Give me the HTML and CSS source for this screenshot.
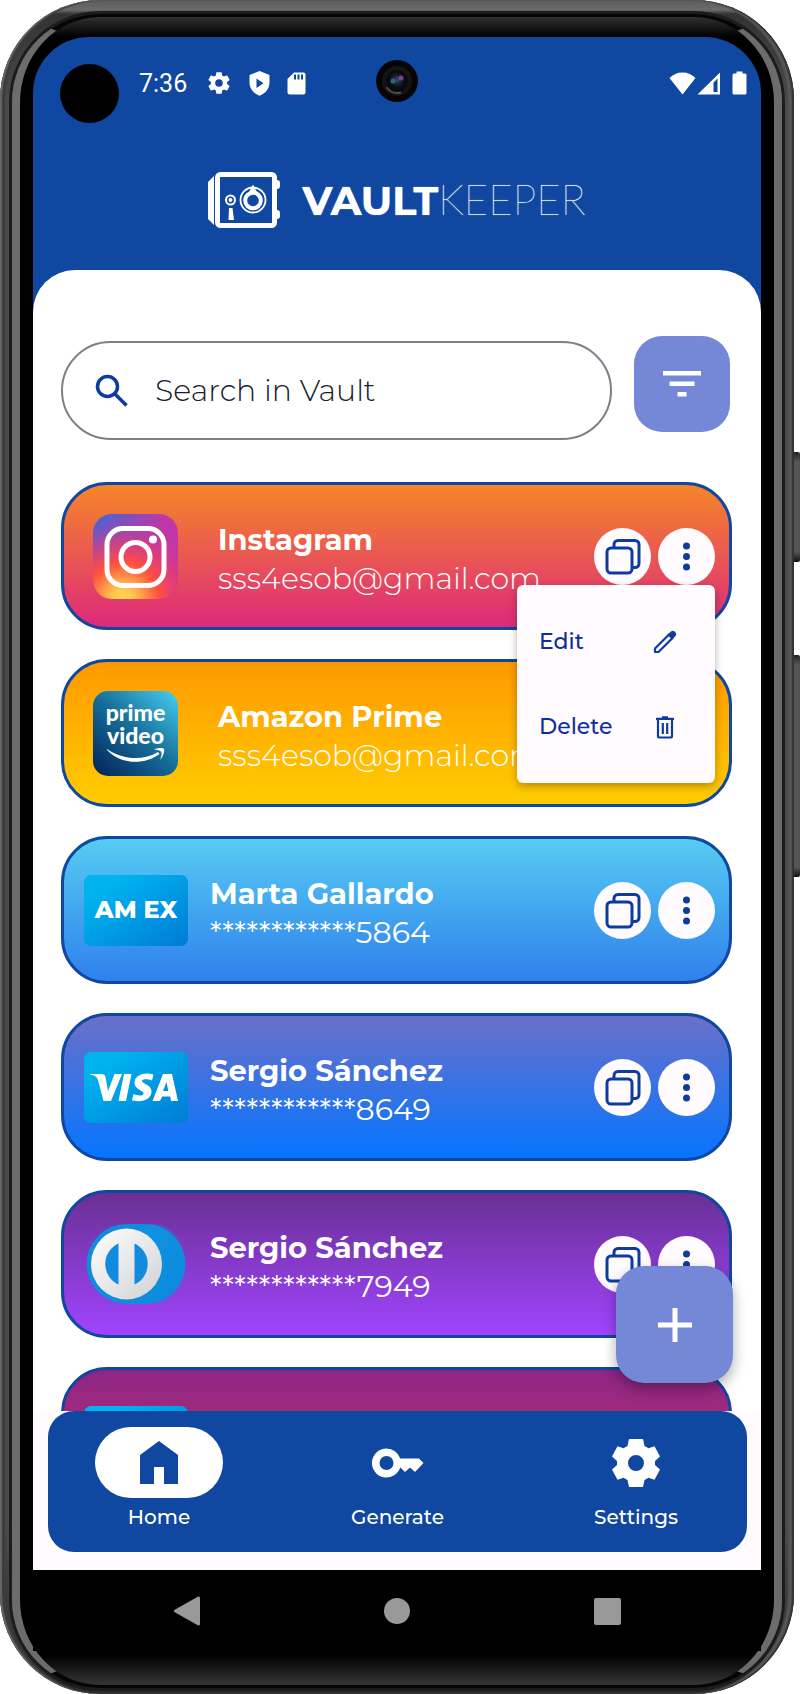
FILE: index.html
```html
<!DOCTYPE html>
<html lang="en">
<head>
<meta charset="utf-8">
<meta name="viewport" content="width=device-width, initial-scale=1">
<title>VaultKeeper</title>
<link rel="stylesheet" href="styles.css">
</head>
<body>
<svg class="defs" aria-hidden="true">
  <defs>
    <linearGradient id="sky" x1="0" y1="0" x2="1" y2="1"><stop offset="0.2" stop-color="#00b2ee"/><stop offset="1" stop-color="#007bd5"/></linearGradient>
    <linearGradient id="silver" x1="0" y1="0" x2="1" y2="1"><stop offset="0.1" stop-color="#fafafa"/><stop offset="0.9" stop-color="#d5d6d8"/></linearGradient>
    <linearGradient id="prime" x1="0.1" y1="1" x2="1" y2="0"><stop offset="0" stop-color="#042860"/><stop offset="0.5" stop-color="#176f9a"/><stop offset="1" stop-color="#46d0f4"/></linearGradient>
    <linearGradient id="insta-base" x1="0" y1="0" x2="1" y2="0.3"><stop offset="0" stop-color="#4168d4"/><stop offset="0.8" stop-color="#c136a6"/></linearGradient>
    <radialGradient id="insta-glow" cx="0.35" cy="1" r="0.95"><stop offset="0" stop-color="#ffdc50"/><stop offset="0.15" stop-color="#ffc24c"/><stop offset="0.45" stop-color="#ff5040"/><stop offset="0.7" stop-color="#e83c70" stop-opacity="0.7"/><stop offset="1" stop-color="#c136a6" stop-opacity="0"/></radialGradient>
    <radialGradient id="lens"><stop offset="0" stop-color="#3a4a70"/><stop offset="0.5" stop-color="#1d2436"/><stop offset="1" stop-color="#0a0a0c"/></radialGradient>
    <symbol id="copy" viewBox="0 0 57 57">
      <g fill="none" stroke="#0d3ba0" stroke-width="3" stroke-linejoin="round">
        <rect x="13" y="20" width="25" height="25" rx="4"/>
        <path d="M20 20v-3.500a4 4 0 0 1 4-4h17a4 4 0 0 1 4 4v19a4 4 0 0 1-4 4h-3"/>
      </g>
    </symbol>
    <symbol id="more" viewBox="0 0 57 57"><g fill="#0d3ba0"><circle cx="28.500" cy="18" r="3.500"/><circle cx="28.500" cy="28.500" r="3.500"/><circle cx="28.500" cy="39" r="3.500"/></g></symbol>
    <symbol id="gear" viewBox="0 0 24 24"><path d="M19.430 12.980c.04-.32.07-.64.07-.98s-.03-.66-.07-.98l2.110-1.650c.19-.15.24-.42.12-.64l-2-3.460c-.12-.22-.39-.3-.61-.22l-2.490 1c-.52-.4-1.080-.73-1.690-.98l-.38-2.650C14.460 2.180 14.250 2 14 2h-4c-.25 0-.46.18-.49.42l-.38 2.650c-.61.25-1.170.59-1.690.98l-2.490-1c-.23-.09-.49 0-.61.22l-2 3.460c-.13.22-.07.49.12.64l2.110 1.650c-.04.32-.07.65-.07.98s.03.66.07.98l-2.110 1.650c-.19.15-.24.42-.12.64l2 3.460c.12.22.39.3.61.22l2.490-1c.52.4 1.080.73 1.690.98l.38 2.650c.03.24.24.42.49.42h4c.25 0 .46-.18.49-.42l.38-2.650c.61-.25 1.170-.59 1.690-.98l2.490 1c.23.09.49 0 .61-.22l2-3.460c.12-.22.07-.49-.12-.64zM12 15.500a3.500 3.500 0 1 1 0-7 3.500 3.500 0 0 1 0 7z"/></symbol>
  </defs>
</svg>

<div class="phone">
  <span class="side-key power"></span>
  <span class="side-key volume"></span>
  <div class="bezel">
    <div class="screen">
      <div class="statusbar">
        <span class="punch"></span>
        <span class="clock">7:36</span>
        <div class="status-left">
          <svg width="26" height="26" viewBox="0 0 24 24" fill="#fff"><use href="#gear"/></svg>
          <svg width="21" height="25" viewBox="0 0 21 25"><path fill="#fff" d="M10.500 0 20.500 4v7.500c0 6-4 11-10 13.200C4.500 22.500.5 17.500.5 11.500V4z"/><path fill="#0f47a1" d="M7.500 7.500v9.500l7-4.750z"/></svg>
          <svg width="19" height="23" viewBox="0 0 19 23"><path fill="#fff" d="M7 .5h9.500a2 2 0 0 1 2 2v18a2 2 0 0 1-2 2h-14a2 2 0 0 1-2-2V7z"/><path stroke="#0f47a1" stroke-width="2" d="M8 2.500v5m3.500-5v5m3.500-5v5"/></svg>
        </div>
        <svg class="camera" width="42" height="42" viewBox="0 0 42 42"><circle cx="21" cy="21" r="21" fill="#050505"/><circle cx="21" cy="21" r="15" fill="#141415"/><path d="M11 27a12 12 0 0 0 14 5" fill="none" stroke="#4a4a4a" stroke-width="3"/><circle cx="21" cy="21" r="11" fill="#0a0a0c"/><circle cx="21" cy="20" r="8" fill="url(#lens)"/><circle cx="17" cy="21" r="2.500" fill="#2f6680"/><circle cx="25" cy="18" r="2.500" fill="#74458f"/></svg>
        <div class="status-right">
          <svg width="27" height="23" viewBox="0 0 27 23"><path fill="#fff" d="M.5 6C4 2.500 8 .5 13.500.5S23 2.500 26.500 6l-13 16.500z"/></svg>
          <svg width="24" height="23" viewBox="0 0 24 23"><path fill="#fff" fill-rule="evenodd" d="M23 .5v22H.5zM20.500 6.500 16.500 10.500V20h4z"/></svg>
          <svg class="battery" width="15" height="24" viewBox="0 0 15 24"><path fill="#fff" d="M4.500.5h6v2H13a1.500 1.500 0 0 1 1.500 1.500v18a1.500 1.500 0 0 1-1.500 1.500H2A1.500 1.500 0 0 1 .5 22V4A1.500 1.500 0 0 1 2 2.500h2.500z"/></svg>
        </div>
      </div>

      <header class="brand">
        <svg width="72" height="58" viewBox="0 0 72 58" aria-hidden="true">
          <path fill="#fff" d="M0 11 6 5v49l-6-6z"/>
          <rect x="9.500" y="3.500" width="57" height="51" rx="3" fill="none" stroke="#fff" stroke-width="5"/>
          <path fill="#fff" d="M69 9a3 3 0 0 1 3 3v3a3 3 0 0 1-3 3zM69 39a3 3 0 0 1 3 3v3a3 3 0 0 1-3 3z"/>
          <circle cx="22.500" cy="29" r="4.500" fill="none" stroke="#fff" stroke-width="2"/><circle cx="22.500" cy="29" r="2" fill="#fff"/>
          <path fill="#fff" d="M21 37h3.500l1.500 12h-5.500z"/>
          <circle cx="45" cy="29" r="12.500" fill="none" stroke="#fff" stroke-width="1.800"/>
          <circle cx="45" cy="29.500" r="7.800" fill="none" stroke="#fff" stroke-width="4"/>
          <path fill="#fff" d="M45 13.500 50 23H40z"/>
        </svg>
        <h1 class="wordmark"><b>VAULT</b>KEEPER</h1>
      </header>

      <main class="sheet">
        <div class="toolbar">
          <label class="search">
            <svg width="34" height="34" viewBox="0 0 34 34" fill="none" stroke="#0d3ba0" stroke-width="3.500"><circle cx="12.500" cy="12.500" r="10"/><path d="m20 20 11.500 11.500"/></svg>
            <input type="text" placeholder="Search in Vault" aria-label="Search in Vault">
          </label>
          <button class="filter" aria-label="Filter"><svg width="40" height="28" viewBox="0 0 40 28" fill="#fff"><path d="M1 1h38v4.500H1zM7.500 11.500h25V16h-25zM15.500 22h9v4.500h-9z"/></svg></button>
        </div>

        <ul class="vault">
          <li class="card app instagram">
            <svg width="85" height="85" viewBox="0 0 85 85"><rect width="85" height="85" rx="19" fill="url(#insta-base)"/><rect width="85" height="85" rx="19" fill="url(#insta-glow)"/><g fill="none" stroke="#fff" stroke-width="5"><rect x="14" y="14.500" width="57" height="57" rx="16"/><circle cx="42.500" cy="43" r="14.500"/></g><circle cx="60" cy="25.500" r="4" fill="#fff"/></svg>
            <div class="info"><h2>Instagram</h2><p>sss4esob@gmail.com</p></div>
            <button class="round" aria-label="Copy"><svg><use href="#copy"/></svg></button>
            <button class="round" aria-label="More"><svg><use href="#more"/></svg></button>
            <div class="menu">
              <button>Edit <svg width="26" height="26" viewBox="0 0 26 26"><path fill="none" stroke="#0d3ba0" stroke-width="2.200" stroke-linejoin="round" d="M3 19.500 17.500 5l3.500 3.500L6.500 23H3z"/><path fill="#0d3ba0" d="m15.500 6 3.500-3.500a2.500 2.500 0 0 1 3.500 0l1 1a2.500 2.500 0 0 1 0 3.500L20 10.500z"/></svg></button>
              <button>Delete <svg width="26" height="26" viewBox="0 0 26 26" fill="none" stroke="#0d3ba0" stroke-width="2.200"><path d="M4 4.800h18M10 3.300h6M6 5v17a1.500 1.500 0 0 0 1.500 1.500h11A1.500 1.500 0 0 0 20 22V5M10.800 9v11M15.200 9v11"/></svg></button>
            </div>
          </li>
          <li class="card app amazon">
            <svg width="85" height="85" viewBox="0 0 85 85"><rect width="85" height="85" rx="15" fill="url(#prime)"/><g class="prime-text" text-anchor="middle"><text x="42.500" y="30">prime</text><text x="42.500" y="53">video</text></g><path fill="#fff" d="M14 58c16 11 36 12 51 3l1.500 2C52 74 28 74 14 59zM61 58.500c4-2 9-2 10-.5s-1 8-4 11c1.500-4 2-7 1-8.500s-4-1.500-7-2z"/></svg>
            <div class="info"><h2>Amazon Prime</h2><p>sss4esob@gmail.com</p></div>
            <button class="round" aria-label="Copy"><svg><use href="#copy"/></svg></button>
            <button class="round" aria-label="More"><svg><use href="#more"/></svg></button>
          </li>
          <li class="card amex">
            <svg width="104" height="71" viewBox="0 0 104 71"><rect width="104" height="71" rx="7" fill="url(#sky)"/><text class="amex-text" x="52" y="43" text-anchor="middle">AM EX</text></svg>
            <div class="info"><h2>Marta Gallardo</h2><p>************5864</p></div>
            <button class="round" aria-label="Copy"><svg><use href="#copy"/></svg></button>
            <button class="round" aria-label="More"><svg><use href="#more"/></svg></button>
          </li>
          <li class="card visa">
            <svg width="104" height="71" viewBox="0 0 104 71"><rect width="104" height="71" rx="7" fill="url(#sky)"/><path fill="#fff" d="M6 22h11.500c2.500 0 3.500 1 4 3L24 39l6.500-17H38L27 49h-7.500L14 28c-1-3-3-4.500-8-5.500zM40 22h7.500L42 49h-7.500zM69.500 22.500 68 28.500c-4.500-2-10-1.800-10 .6 0 2.800 9.500 3.500 9.500 10.400 0 8-10 11.500-19.500 8.700l1.500-6.200c5 2.200 10 1.800 10-.6 0-3-9-3.700-9-10.600 0-7.800 10-11.200 19-8.300zM79 22h9l6 27h-7l-.8-4.500h-8L76 49h-7.500zm3.500 8-3.500 9h5.300z"/></svg>
            <div class="info"><h2>Sergio Sánchez</h2><p>************8649</p></div>
            <button class="round" aria-label="Copy"><svg><use href="#copy"/></svg></button>
            <button class="round" aria-label="More"><svg><use href="#more"/></svg></button>
          </li>
          <li class="card diners">
            <svg width="104" height="80" viewBox="0 0 104 80"><rect x="2.500" width="99" height="80" rx="40" fill="#118bdd"/><rect x="40" width="61.500" height="80" rx="40" fill="url(#sky)" opacity="0.200"/><circle cx="42.500" cy="40" r="35.500" fill="url(#silver)"/><path fill="#118bdd" d="M34.500 19.500a22.500 22.500 0 0 0 0 41zM50.500 19.500a22.500 22.500 0 0 1 0 41z"/></svg>
            <div class="info"><h2>Sergio Sánchez</h2><p>************7949</p></div>
            <button class="round" aria-label="Copy"><svg><use href="#copy"/></svg></button>
            <button class="round" aria-label="More"><svg><use href="#more"/></svg></button>
          </li>
          <li class="card berry">
            <svg width="104" height="71" viewBox="0 0 104 71"><rect width="104" height="71" rx="7" fill="url(#sky)"/></svg>
            <div class="info"><h2>Sergio Sánchez</h2><p>&nbsp;</p></div>
          </li>
        </ul>
        <button class="fab" aria-label="Add"><svg width="34" height="34" viewBox="0 0 34 34" fill="#fff"><path d="M14.500 0h5v14.500H34v5H19.500V34h-5V19.500H0v-5h14.500z"/></svg></button>
      </main>

      <div class="dock">
        <nav class="tabs">
          <a class="tab active" href="#home"><span class="pill"><svg width="38" height="43" viewBox="0 0 38 43"><path fill="#0f47a1" d="M19 0 38 14v29H24V26H14v17H0V14z"/></svg></span>Home</a>
          <a class="tab" href="#generate"><span class="pill"><svg width="52" height="30" viewBox="0 0 52 30"><path fill="#fff" fill-rule="evenodd" d="M14.500.5a14.500 14.500 0 0 1 13.700 10H47l4.500 4.500-8.500 9-5-4.500-5 4.500-4.500-4.500h-.3A14.500 14.500 0 1 1 14.500.5zm0 7.500a7 7 0 1 0 0 14 7 7 0 0 0 0-14z"/></svg></span>Generate</a>
          <a class="tab" href="#settings"><span class="pill"><svg width="48" height="48" viewBox="0 0 48 48"><path fill="#fff" fill-rule="evenodd" d="M17 0h14l1.500 7 4 2.200 6-2L48 17.500 43 22v4l5 4.500-5.500 10.300-6-2-4 2.200-1.500 7H17l-1.500-7-4-2.200-6 2L0 30.500 5 26v-4l-5-4.500L5.500 7.200l6 2 4-2.200zm7 16a8 8 0 1 0 0 16 8 8 0 0 0 0-16z"/></svg></span>Settings</a>
        </nav>
      </div>

      <div class="sysnav">
        <button aria-label="Back"><svg width="28" height="30" viewBox="0 0 28 30"><path fill="#999" stroke="#999" stroke-width="3" stroke-linejoin="round" d="M2.500 15 25.500 2v26z"/></svg></button>
        <button aria-label="Home"><svg width="28" height="30" viewBox="0 0 28 30"><circle cx="14" cy="15" r="13" fill="#999"/></svg></button>
        <button aria-label="Recents"><svg width="28" height="30" viewBox="0 0 28 30"><rect x="1" y="2" width="27" height="27" rx="2" fill="#999"/></svg></button>
      </div>
    </div>
  </div>
</div>
</body>
</html>
```
FILE: styles.css
```css
* { box-sizing: border-box; margin: 0; padding: 0; }

body {
  background: #fff;
  font-family: Montserrat, Inter, "Open Sans", sans-serif;
  color: #fff;
}

svg { display: block; flex: none; }
button { border: 0; background: none; color: inherit; font: inherit; cursor: pointer; }
.defs { position: absolute; width: 0; height: 0; }

/* Handset */
.phone {
  position: relative;
  height: 100vh;
  margin-right: 6px;
  padding: 14px 12px 6px;
  border-radius: 100px;
  background: linear-gradient(#5c5c5c, #6b6b6b 10px, #333 14px, #4a4a4a 100px, #4a4a4a 90%, #2a2a2a);
  box-shadow: inset 2px 0 1px #666, inset 5px 0 1px #3c3c3c, inset -2px 0 1px #333, inset -6px 0 1px #555;
}
.side-key {
  position: absolute;
  right: -6px;
  width: 6px;
  border-radius: 0 2px 2px 0;
  background: linear-gradient(#222, #555 10px, #555 calc(100% - 10px), #111);
}
.power { top: 452px; height: 110px; }
.volume { top: 655px; height: 222px; }
.bezel {
  height: 100%;
  padding: 20px 13px 34px;
  border: 3px solid #000;
  border-width: 3px 8px;
  border-color: #050505 #6c6c6c;
  border-radius: 88px;
  background: linear-gradient(#303030, #000 20px, #000 calc(100% - 30px), #363636);
  box-shadow: 0 0 0 3px #1c1c1c;
}
.screen {
  display: flex;
  flex-direction: column;
  height: 100%;
  overflow: hidden;
  border-radius: 56px 56px 0 0;
  background: #0f47a1;
}

/* Status bar */
.statusbar {
  position: relative;
  display: flex;
  align-items: center;
  height: 92px;
  padding: 0 14px 0 27px;
}
.punch { width: 59px; height: 59px; margin-top: 20px; border-radius: 50%; background: #000; }
.clock { margin: 2px 19px 0 20px; font: 400 25px/30px Roboto, sans-serif; }
.status-left { display: flex; align-items: center; gap: 17px; }
.status-right { display: flex; align-items: center; gap: 1px; margin-left: auto; }
.battery { margin-left: 10px; }
.camera { position: absolute; top: 23px; left: 50%; margin-left: -21px; }

/* Brand */
.brand {
  display: flex;
  justify-content: center;
  align-items: center;
  gap: 22px;
  height: 141px;
}
.wordmark { font: 200 42px/50px Lato, sans-serif; text-shadow: 0 0 1px #fff; }
.wordmark b { font: 700 40px/50px Montserrat, Lato, sans-serif; }

/* Content sheet */
.sheet {
  position: relative;
  display: flex;
  flex: 1;
  flex-direction: column;
  min-height: 0;
  padding: 66px 29px 0 28px;
  border-radius: 42px 42px 0 0;
  background: #fff;
}
.toolbar { display: flex; gap: 22px; padding-right: 2px; }
.search {
  display: flex;
  flex: 1;
  align-items: center;
  gap: 26px;
  min-width: 0;
  height: 99px;
  margin-top: 5px;
  padding: 0 32px;
  border: 2px solid #817e8a;
  border-radius: 50px;
}
.search input {
  flex: 1;
  min-width: 0;
  border: 0;
  outline: 0;
  background: none;
  color: #1c1b1f;
  font: 300 30px/40px Montserrat, Inter, sans-serif;
}
.search input::placeholder { color: #1c1b2f; opacity: 1; }
.filter {
  display: grid;
  place-items: center;
  flex: none;
  width: 96px;
  height: 96px;
  border-radius: 28px;
  background: #7587d7;
}

/* Vault entries */
.vault {
  display: flex;
  flex: 1;
  flex-direction: column;
  gap: 29px;
  min-height: 0;
  margin: 42px -29px 0 -28px;
  padding: 0 29px 0 28px;
  overflow: hidden;
  list-style: none;
}
.card {
  position: relative;
  display: flex;
  flex: none;
  align-items: center;
  height: 148px;
  padding: 0 14px 0 20px;
  border: 3px solid #0f47a1;
  border-radius: 46px;
  background: linear-gradient(var(--from), var(--to));
}
.app { padding-left: 29px; }
.instagram { --from: #f58529; --to: #dd2a7b; z-index: 1; }
.amazon { --from: #ff9900; --to: #ffcc00; }
.amex { --from: #56ccf2; --to: #2f80ed; }
.visa { --from: #6a70c8; --to: #0575ff; }
.diners { --from: #6a3093; --to: #a044ff; }
.berry { --from: #8e2586; --to: #c73662; }
.info { flex: 1; min-width: 0; margin-left: 22px; padding-top: 6px; }
.app .info { margin-left: 40px; }
.info h2 { font-size: 29px; font-weight: 700; line-height: 39px; }
.info p { font-size: 30px; font-weight: 400; line-height: 39px; white-space: nowrap; }
.app .info p { font-weight: 300; }
.round {
  flex: none;
  width: 57px;
  height: 57px;
  margin-left: 7px;
  border-radius: 50%;
  background: #fffbfe;
}
.round svg { width: 57px; height: 57px; }
.prime-text { fill: #fff; font: 900 23px Lato, sans-serif; }
.amex-text { fill: #fff; font: 800 24px Montserrat, Inter, sans-serif; }

/* Entry menu */
.menu {
  position: absolute;
  top: 100px;
  right: 14px;
  width: 198px;
  padding: 14px 0;
  border-radius: 6px;
  background: #fffbfe;
  box-shadow: 0 3px 8px rgba(0, 0, 0, 0.3);
}
.menu button {
  display: flex;
  align-items: center;
  justify-content: space-between;
  width: 100%;
  height: 85px;
  padding: 0 37px 0 22px;
  color: #0d2f9c;
  font-size: 22px;
  font-weight: 500;
  line-height: 30px;
}

.fab {
  position: absolute;
  right: 28px;
  bottom: 28px;
  z-index: 2;
  display: grid;
  place-items: center;
  width: 117px;
  height: 117px;
  border-radius: 28px;
  background: #7587d7;
  box-shadow: 0 6px 14px rgba(0, 0, 0, 0.32);
}

/* Bottom tabs */
.dock { padding: 0 14px 18px 15px; background: #fffbfe; }
.tabs {
  display: flex;
  justify-content: space-between;
  height: 141px;
  padding: 16px 47px 0;
  border-radius: 26px;
  background: #0f47a1;
}
.tab {
  display: flex;
  flex-direction: column;
  align-items: center;
  gap: 6px;
  color: #fff;
  font-size: 20px;
  font-weight: 500;
  line-height: 26px;
  text-decoration: none;
}
.pill { display: grid; place-items: center; width: 128px; height: 71px; border-radius: 36px; }
.active .pill { background: #fff; }

.sysnav {
  display: flex;
  justify-content: space-between;
  align-items: center;
  height: 81px;
  padding: 0 140px;
  background: #000;
}
```
